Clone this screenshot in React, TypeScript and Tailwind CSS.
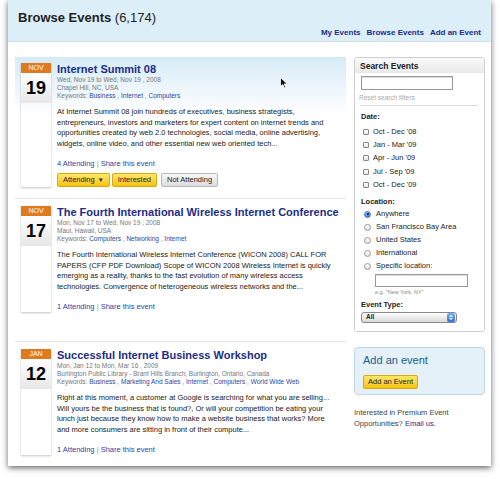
import React from 'react';

type EventItem = {
  month: string;
  day: string;
  title: string;
  dates: string;
  place: string;
  keywords: string[];
  blurb: string;
  attending: string;
  active?: boolean;
};

const events: EventItem[] = [
  {
    month: 'NOV',
    day: '19',
    title: 'Internet Summit 08',
    dates: 'Wed, Nov 19 to Wed, Nov 19 , 2008',
    place: 'Chapel Hill, NC, USA',
    keywords: ['Business', 'Internet', 'Computers'],
    blurb:
      'At Internet Summit 08 join hundreds of executives, business strategists, entrepreneurs, investors and marketers for expert content on internet trends and opportunities created by web 2.0 technologies, social media, online advertising, widgets, online video, and other essential new web oriented tech...',
    attending: '4 Attending',
    active: true,
  },
  {
    month: 'NOV',
    day: '17',
    title: 'The Fourth International Wireless Internet Conference',
    dates: 'Mon, Nov 17 to Wed, Nov 19 , 2008',
    place: 'Maui, Hawaii, USA',
    keywords: ['Computers', 'Networking', 'Internet'],
    blurb:
      'The Fourth International Wireless Internet Conference (WICON 2008) CALL FOR PAPERS (CFP PDF Download) Scope of WICON 2008 Wireless Internet is quickly emerging as a reality, thanks to the fast evolution of many wireless access technologies. Convergence of heterogeneous wireless networks and the...',
    attending: '1 Attending',
  },
  {
    month: 'JAN',
    day: '12',
    title: 'Successful Internet Business Workshop',
    dates: 'Mon, Jan 12 to Mon, Mar 16 , 2009',
    place: 'Burlington Public Library - Brant Hills Branch, Burlington, Ontario, Canada',
    keywords: ['Business', 'Marketing And Sales', 'Internet', 'Computers', 'World Wide Web'],
    blurb:
      'Right at this moment, a customer at Google is searching for what you are selling... Will yours be the business that is found?, Or will your competition be eating your lunch just because they know how to make a website business that works? More and more consumers are sitting in front of their compute...',
    attending: '1 Attending',
  },
];

const dateRanges = ["Oct - Dec '08", "Jan - Mar '09", "Apr - Jun '09", "Jul - Sep '09", "Oct - Dec '09"];
const locations = ['Anywhere', 'San Francisco Bay Area', 'United States', 'International', 'Specific location:'];

const DateBadge: React.FC<{ month: string; day: string }> = ({ month, day }) => (
  <div className="w-[30px] shrink-0 shadow-[0_1px_2px_rgba(0,0,0,0.25)]">
    <div className="h-[10px] bg-[#e07a1f] text-white text-[7px] leading-[10px] text-center">{month}</div>
    <div className="h-[30px] bg-gradient-to-b from-white to-[#e6e6e6] text-[18px] leading-[30px] font-bold text-center text-black">
      {day}
    </div>
  </div>
);

const EventRow: React.FC<{ ev: EventItem }> = ({ ev }) => (
  <div
    className={
      'flex gap-[6px] px-[6px] border-b border-[#e4e4e4] ' +
      (ev.active ? 'pt-[6px] pb-[11px] bg-gradient-to-b from-[#d6ebf7] via-white via-[40%] to-white' : 'pt-[7px] pb-[29px]')
    }
  >
    <DateBadge month={ev.month} day={ev.day} />
    <div className="flex-1 min-w-0">
      <div className="text-[11px] leading-[12px] font-bold text-[#1b2d86]">{ev.title}</div>
      <div className="mt-[1px] text-[6.5px] leading-[8px] text-[#777]">
        <div>{ev.dates}</div>
        <div className="whitespace-nowrap">{ev.place}</div>
        <div className="whitespace-nowrap">
          Keywords:{' '}
          {ev.keywords.map((k, i) => (
            <span key={k}>
              <span className="text-[#2a47a0]">{k}</span>
              {i < ev.keywords.length - 1 ? ' , ' : ''}
            </span>
          ))}
        </div>
      </div>
      <p className="mt-[7px] pr-[2px] text-[7.5px] leading-[10.5px] text-[#222]">{ev.blurb}</p>
      <div className="mt-[10px] text-[7.5px] leading-[10px] text-[#2a47a0]">
        {ev.attending} <span className="text-[#999]">|</span> Share this event
      </div>
      {ev.active && (
        <div className="mt-[4px] flex gap-[2px] text-[7.5px] leading-[12px]">
          <button className="h-[14px] px-[5px] rounded-[2px] border border-[#d8aa10] bg-gradient-to-b from-[#ffe766] to-[#f4c300] text-[#222] flex items-center gap-[3px]">
            Attending <span className="text-[6px]">▼</span>
          </button>
          <button className="h-[14px] px-[5px] rounded-[2px] border border-[#d8aa10] bg-gradient-to-b from-[#ffe766] to-[#f4c300] text-[#222]">
            Interested
          </button>
          <button className="ml-[2px] h-[14px] px-[5px] rounded-[2px] border border-[#b8b8b8] bg-gradient-to-b from-[#f8f8f8] to-[#dcdcdc] text-[#222]">
            Not Attending
          </button>
        </div>
      )}
    </div>
  </div>
);

const SearchPanel: React.FC = () => (
  <div className="border border-[#cfcfcf] rounded-[3px] overflow-hidden text-[7.5px] text-[#222]">
    <div className="h-[15px] px-[5px] bg-gradient-to-b from-[#fafafa] to-[#e9e9e9] text-[8.5px] leading-[16px] font-bold">
      Search Events
    </div>
    <div className="px-[6px] pt-[3px] pb-[8px]">
      <div className="w-[92px] h-[14px] border border-[#999] bg-white shadow-[inset_0_1px_1px_rgba(0,0,0,0.15)]" />
      <div className="mt-[3px] -ml-[2px] text-[6.5px] leading-[10px] text-[#aaa]">Reset search filters</div>
      <div className="mt-[2px] -ml-[1px] border-t border-[#ddd]" />
      <div className="mt-[6px] font-bold leading-[10px]">Date:</div>
      <div className="mt-[3px] ml-[2px]">
        {dateRanges.map(d => (
          <div key={d} className="h-[13.4px] flex items-center gap-[4px]">
            <span className="w-[6px] h-[6px] border border-[#888] rounded-[1px] bg-gradient-to-b from-white to-[#e4e4e4]" />
            <span className="leading-[10px]">{d}</span>
          </div>
        ))}
      </div>
      <div className="mt-[5px] font-bold leading-[10px]">Location:</div>
      <div className="mt-[1px] ml-[3px]">
        {locations.map((l, i) => (
          <div key={l} className="h-[13px] flex items-center gap-[5px]">
            <span
              className={
                'w-[7px] h-[7px] rounded-full border flex items-center justify-center ' +
                (i === 0 ? 'border-[#3a70c8] bg-gradient-to-b from-[#9cc4f5] to-[#3d7fe0]' : 'border-[#999] bg-gradient-to-b from-white to-[#e2e2e2]')
              }
            >
              {i === 0 && <span className="w-[2px] h-[2px] rounded-full bg-black" />}
            </span>
            <span className="leading-[10px]">{l}</span>
          </div>
        ))}
      </div>
      <div className="ml-[14px] mt-[1px] w-[93px] h-[13px] border border-[#999] bg-white shadow-[inset_0_1px_1px_rgba(0,0,0,0.15)]" />
      <div className="ml-[14px] mt-[1px] text-[5.5px] leading-[8px] text-[#888]">e.g. "New York, NY"</div>
      <div className="mt-[4px] font-bold leading-[10px]">Event Type:</div>
      <div className="mt-[2px] w-[96px] h-[11px] rounded-[3px] border border-[#888] bg-gradient-to-b from-white to-[#d9d9d9] flex items-center justify-between pl-[4px] text-[6.5px] leading-[10px]">
        <span className="font-bold">All</span>
        <span className="w-[8px] h-[9px] mr-[1px] rounded-[2px] bg-gradient-to-b from-[#7ab2f2] to-[#2f6fd6] flex flex-col items-center justify-center gap-[1px]">
          <span className="w-0 h-0 border-x-[2px] border-x-transparent border-b-[2px] border-b-white" />
          <span className="w-0 h-0 border-x-[2px] border-x-transparent border-t-[2px] border-t-white" />
        </span>
      </div>
    </div>
  </div>
);

export default function App() {
  return (
    <div className="w-[500px] h-[479px] bg-white overflow-hidden" style={{ fontFamily: '"Liberation Sans", Arial, sans-serif' }}>
      <div className="relative ml-[8px] w-[483px] h-[466px] bg-white shadow-[0_2px_6px_rgba(0,0,0,0.6)]">
        <div className="h-[42px] bg-[#dceef8] border-b border-[#cfe2ee] px-[10px] flex flex-col">
          <div className="pt-[10px] text-[13px] leading-[16px] text-[#222]">
            <span className="font-bold">Browse Events</span> (6,174)
          </div>
          <div className="mt-[2px] self-end flex gap-[6px] text-[8px] leading-[10px] font-bold text-[#1b2d86]">
            <span>My Events</span>
            <span>Browse Events</span>
            <span>Add an Event</span>
          </div>
        </div>

        <div className="pt-[15px] px-[7px] flex gap-[8px]">
          <div className="w-[331px] shrink-0">
            {events.map(ev => (
              <EventRow key={ev.title} ev={ev} />
            ))}
          </div>

          <div className="w-[131px] shrink-0">
            <SearchPanel />
            <div className="mt-[15px] h-[48px] rounded-[4px] border border-[#bcd6e8] bg-[#e4f1f9] px-[8px] pt-[6px]">
              <div className="text-[11px] leading-[13px] text-[#1d5c8e]">Add an event</div>
              <button className="mt-[2px] h-[14px] px-[4px] rounded-[2px] border border-[#d8aa10] bg-gradient-to-b from-[#ffe766] to-[#f4c300] text-[7.5px] leading-[12px] text-[#222]">
                Add an Event
              </button>
            </div>
            <p className="mt-[12px] text-[7.5px] leading-[11px] text-[#444]">
              Interested in Premium Event Opportunities? <a className="text-[#1b2d86]">Email us.</a>
            </p>
          </div>
        </div>

        {/* mouse pointer */}
        <svg className="absolute left-[272px] top-[77px]" width="8" height="12" viewBox="0 0 8 12">
          <path d="M0.5 0.5 L0.5 9.5 L2.8 7.5 L4.3 11 L5.6 10.4 L4.2 7 L7.2 7 Z" fill="#111" stroke="#fff" strokeWidth="0.8" />
        </svg>
      </div>
    </div>
  );
}
